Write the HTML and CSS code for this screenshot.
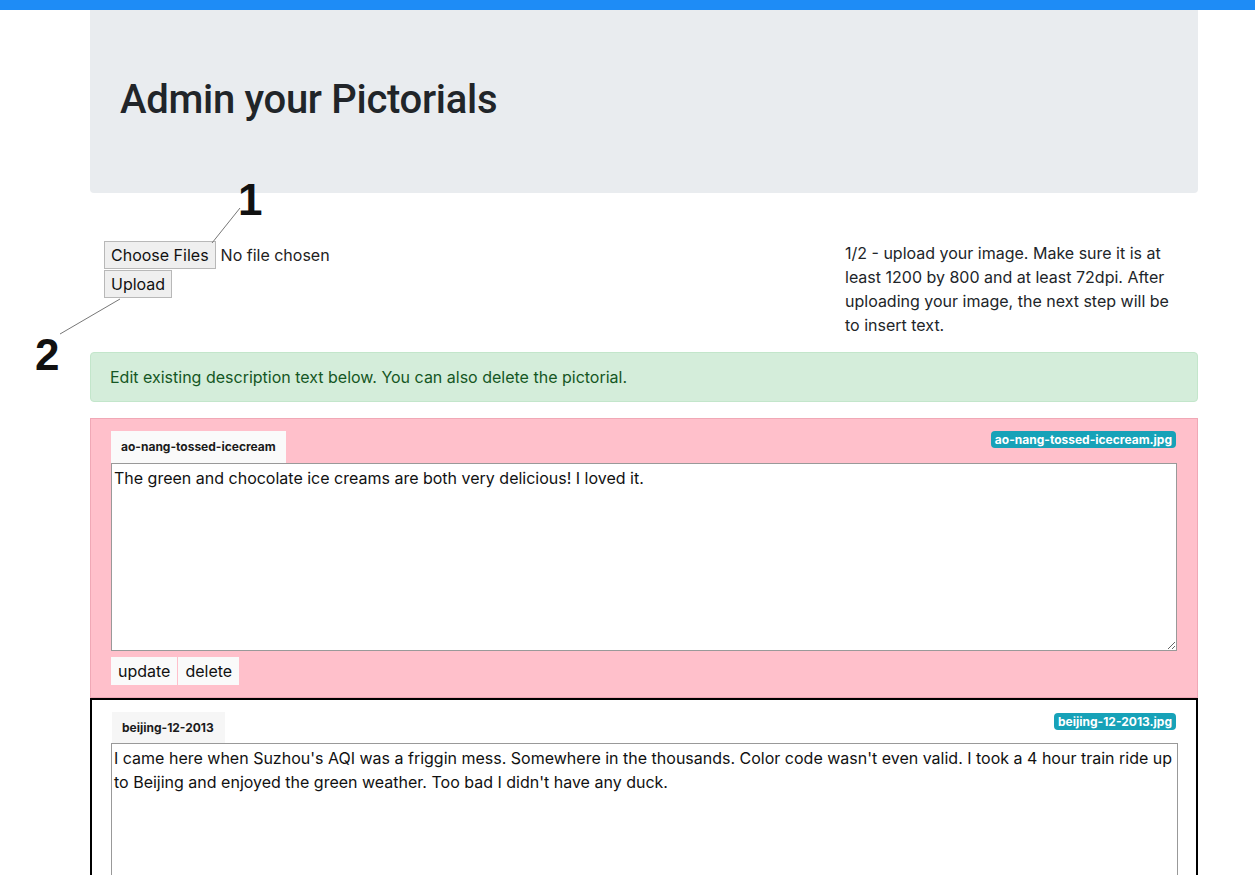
FILE: index.html
```html
<!DOCTYPE html>
<html lang="en">
<head>
<meta charset="utf-8">
<title>Admin your Pictorials</title>
<link rel="stylesheet" href="styles.css">
</head>
<body>
<div class="topbar"></div>
<div class="container">
  <div class="jumbotron">
    <h1 class="title">Admin your Pictorials</h1>
  </div>

  <div class="upload-row">
    <form class="upload-form">
      <div class="file-line">
        <button type="button" class="btn-native">Choose Files</button>
        <span class="no-file">No file chosen</span>
      </div>
      <button type="button" class="btn-native">Upload</button>
    </form>
    <p class="upload-help">1/2 - upload your image. Make sure it is at least 1200 by 800 and at least 72dpi. After uploading your image, the next step will be to insert text.</p>

    <span class="callout callout-1">1</span>
    <span class="callout callout-2">2</span>
    <svg class="callout-lines" width="300" height="200" viewBox="0 0 300 200">
      <line x1="240" y1="15" x2="212" y2="50" stroke="#777" stroke-width="1"/>
      <line x1="120" y1="106" x2="60" y2="141" stroke="#777" stroke-width="1"/>
    </svg>
  </div>

  <div class="alert">Edit existing description text below. You can also delete the pictorial.</div>

  <div class="pictorial pictorial-active">
    <div class="pic-head">
      <span class="pic-tab">ao-nang-tossed-icecream</span>
      <span class="badge">ao-nang-tossed-icecream.jpg</span>
    </div>
    <textarea class="pic-text">The green and chocolate ice creams are both very delicious! I loved it.</textarea>
    <div class="pic-actions">
      <button type="button" class="btn-flat">update</button>
      <button type="button" class="btn-flat">delete</button>
    </div>
  </div>

  <div class="pictorial pictorial-plain">
    <div class="pic-head">
      <span class="pic-tab pic-tab-gray">beijing-12-2013</span>
      <span class="badge">beijing-12-2013.jpg</span>
    </div>
    <textarea class="pic-text">I came here when Suzhou's AQI was a friggin mess. Somewhere in the thousands. Color code wasn't even valid. I took a 4 hour train ride up to Beijing and enjoyed the green weather. Too bad I didn't have any duck.</textarea>
  </div>
</div>
</body>
</html>
```

FILE: styles.css
```css
* { box-sizing: border-box; }

html, body {
  margin: 0;
  padding: 0;
  background: #fff;
  overflow: hidden;
}

body {
  font-family: Inter, "Liberation Sans", Arial, sans-serif;
  font-size: 16px;
  line-height: 24px;
  color: #212529;
}

.topbar {
  height: 10px;
  background: #1e8cf6;
}

.container {
  margin-left: 90px;
  width: 1108px;
}

.jumbotron {
  background: #e9ecef;
  height: 183px;
  border-radius: 0 0 4px 4px;
  padding: 66px 30px 0;
}

.title {
  margin: 0;
  font-family: Roboto, "Liberation Sans", Arial, sans-serif;
  font-size: 40px;
  line-height: 48px;
  font-weight: 500;
  color: #212529;
  letter-spacing: -0.3px;
}

.upload-row {
  position: relative;
  display: flex;
  justify-content: space-between;
  padding-top: 48px;
  height: 159px;
}

.upload-form {
  margin-left: 14px;
  display: flex;
  flex-direction: column;
  align-items: flex-start;
  gap: 1px;
}

.file-line {
  display: flex;
  align-items: center;
}

.btn-native {
  font-family: Inter, "Liberation Sans", Arial, sans-serif;
  font-size: 16px;
  color: #111;
  background: #efefef;
  border: 1px solid #b8b8b8;
  height: 28px;
  padding: 0 6px;
  margin: 0;
  line-height: 26px;
}

.no-file {
  margin-left: 5px;
  color: #222;
}

.upload-help {
  margin: 0 26px 0 0;
  width: 327px;
  font-size: 16px;
  line-height: 24px;
  color: #212529;
}

.callout {
  position: absolute;
  font-family: "Liberation Sans", Arial, sans-serif;
  font-weight: 700;
  font-size: 44px;
  line-height: 1;
  color: #111;
}

.callout-1 { left: 148px; top: -15px; }
.callout-2 { left: -55px; top: 140px; }

.callout-lines {
  position: absolute;
  left: -90px;
  top: 0;
  pointer-events: none;
}

.alert {
  background: #d4edda;
  border: 1px solid #c3e6cb;
  border-radius: 4px;
  color: #155724;
  padding: 12px 19px;
  height: 50px;
  margin-bottom: 16px;
}

.pictorial {
  padding: 12px 20px 12px 20px;
}

.pictorial-active {
  background: #ffc0cb;
  border: 1px solid #f0a8b6;
}

.pictorial-plain {
  background: #fff;
  border: 2px solid #000;
  padding: 12px 19px 12px 19px;
}

.pic-head {
  display: flex;
  justify-content: space-between;
  align-items: flex-start;
}

.pic-tab {
  display: block;
  background: #fafafa;
  font-size: 12px;
  font-weight: 700;
  line-height: 32px;
  height: 32px;
  padding: 0 10px;
  color: #1b1b1b;
}

.pic-tab-gray {
  background: #f6f6f6;
  height: 31px;
  line-height: 31px;
  padding: 0 11px 0 10px;
  margin-left: 1px;
}

.badge {
  display: block;
  background: #17a2b8;
  color: #fff;
  font-size: 12px;
  font-weight: 700;
  line-height: 13px;
  padding: 2px 4px;
  border-radius: 4px;
  margin-right: 1px;
}

.pictorial-plain .badge { margin-top: 1px; }

.pic-text {
  display: block;
  width: 100%;
  height: 188px;
  margin: 0;
  border: 1px solid #999;
  background: #fff;
  font-family: Inter, "Liberation Sans", Arial, sans-serif;
  font-size: 16px;
  line-height: 24px;
  padding: 2px 2px;
  color: #111;
  resize: vertical;
}

.pictorial-plain .pic-text {
  width: 1067px;
}

.pic-actions {
  display: flex;
  gap: 1px;
  margin-top: 6px;
}

.btn-flat {
  font-family: Inter, "Liberation Sans", Arial, sans-serif;
  font-size: 16px;
  color: #111;
  background: #fafafa;
  border: none;
  height: 28px;
  line-height: 28px;
  padding: 0 7px;
  margin: 0;
}
```
